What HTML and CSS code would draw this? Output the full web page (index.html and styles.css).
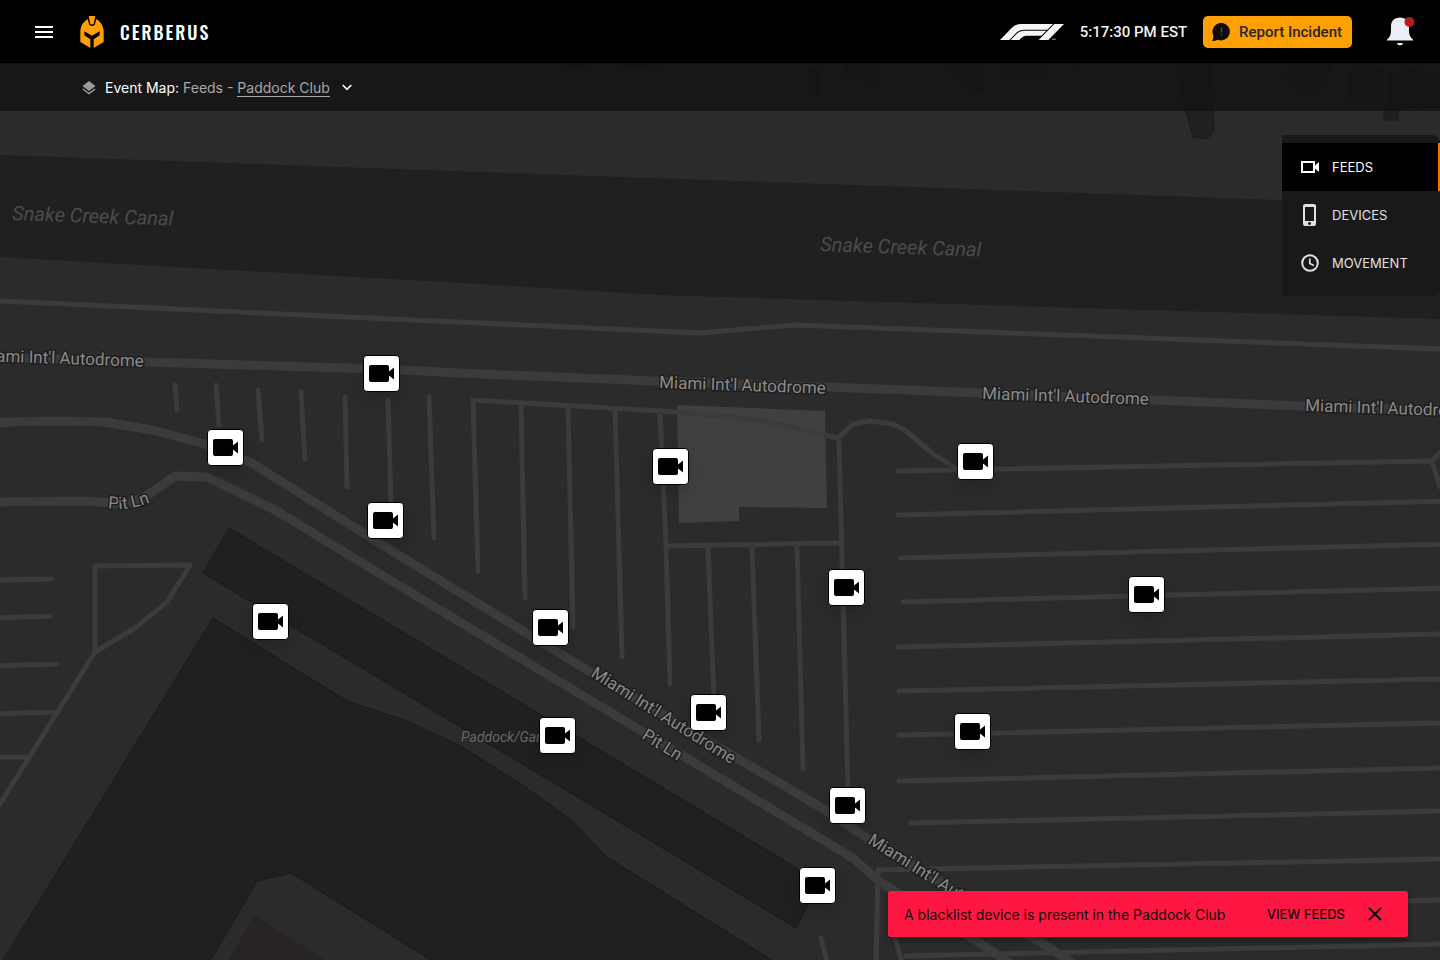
FILE: index.html
```html
<!DOCTYPE html>
<html lang="en">
<head>
<meta charset="utf-8">
<meta name="viewport" content="width=device-width, initial-scale=1">
<title>Cerberus - Event Map</title>
<link rel="stylesheet" href="styles.css">
</head>
<body>
<svg class="sprite" aria-hidden="true">
  <symbol id="cam" viewBox="0 0 25 17"><path d="M2 0H18Q20 0 20 2V6.500L25 2.500V14.500L20 10.500V15Q20 17 18 17H2Q0 17 0 15V2Q0 0 2 0Z"/></symbol>
</svg>

<header class="topbar">
  <button class="icon-btn menu-btn" aria-label="Open menu">
    <svg width="18" height="12" viewBox="0 0 18 12"><path fill="#fff" d="M0 0h18v2H0zM0 5h18v2H0zM0 10h18v2H0z"/></svg>
  </button>
  <a class="brand" href="#">
    <svg width="24" height="32" viewBox="239 48 72 96" aria-hidden="true">
      <path fill="#ffa000" d="M240 92C241 78 248 66 262 57L267 75Q275 81 283 75L288 57C301 65 309 78 310 92V126L280 144V118L298 106V94L275 107L252 94V106L270 118V144L240 126Z"/>
      <path fill="#ffa000" d="M265 48H285L280 73H270Z"/>
    </svg>
    <span class="brand-name">CERBERUS</span>
  </a>
  <div class="top-actions">
    <svg class="f1" width="66" height="18" viewBox="60 69 198 54" role="img" aria-label="F1">
      <g fill="#f5f5f5">
        <path d="M63 120L98 84Q110 72 126 72H222L205 89H134Q121 89 112 98L91 120Z"/>
        <path d="M95 120L115 100Q123 92 134 92H202L187 107H142Q134 107 128 113L121 120Z"/>
        <path d="M179 120L226 72H255L208 120Z"/>
        <path d="M219 116h11v4h-11z" opacity=".5"/>
      </g>
    </svg>
    <time class="clock">5:17:30 PM EST</time>
    <button class="report">
      <svg width="18" height="18" viewBox="0 0 18 18" aria-hidden="true"><path fill="#0b0b0b" d="M9.500 0A8.700 8.700 0 1 1 6 16.800Q3 18 0 18Q1.600 15.800 1.300 12.500A8.700 8.700 0 0 1 9.500 0Z"/><path fill="#6d4500" d="M8.700 4.500h1.600v5H8.700zM8.700 11h1.600v1.600H8.700z"/></svg>
      <span>Report Incident</span>
    </button>
    <button class="icon-btn bell" aria-label="Notifications">
      <svg width="28" height="30" viewBox="0 0 28 30"><path fill="#eceff3" d="M13 0.500C18.500 0.500 22 4 22 9V14C22 18 23.500 20.500 26 22.500V23.500H0V22.500C2.500 20.500 4 18 4 14V9C4 4 7.500 0.500 13 0.500ZM9.800 26H16.200A3.300 3.300 0 0 1 9.800 26Z"/><circle cx="22.500" cy="5" r="5" fill="#b71c1c"/></svg>
    </button>
  </div>
</header>

<nav class="subbar" aria-label="Map view">
  <svg width="14" height="14" viewBox="0 0 14 14" aria-hidden="true"><path fill="#9b9b9b" d="M7 0L13.500 5L7 10L0.500 5Z"/><path fill="none" stroke="#9b9b9b" stroke-width="1.500" d="M0.800 8L7 12.600L13.200 8"/></svg>
  <p class="crumb"><strong>Event Map:</strong> Feeds - <a href="#">Paddock Club</a></p>
  <button class="icon-btn" aria-label="Choose location"><svg width="10" height="7" viewBox="0 0 10 7"><path fill="none" stroke="#fff" stroke-width="1.600" d="M0.700 1L5 5.300L9.300 1"/></svg></button>
</nav>

<main class="stage">
  <aside class="layers">
    <button class="layer is-active"><span class="layer-icon"><svg width="20" height="14" viewBox="0 0 20 14"><path fill="#fff" fill-rule="evenodd" d="M1 1H15V5.500L19 2V12L15 8.500V13H1ZM3 3V11H13V3Z"/></svg></span>FEEDS</button>
    <button class="layer"><span class="layer-icon"><svg width="14" height="22" viewBox="0 0 14 22"><path fill="#e0e0e0" fill-rule="evenodd" d="M2 0H11Q13 0 13 2V20Q13 22 11 22H2Q0 22 0 20V2Q0 0 2 0ZM2 3V17H11V3ZM6.500 18A1.500 1.500 0 1 0 6.510 18Z"/></svg></span>DEVICES</button>
    <button class="layer"><span class="layer-icon"><svg width="18" height="18" viewBox="0 0 18 18" fill="none" stroke="#e0e0e0" stroke-width="2"><circle cx="9" cy="9" r="7.800"/><path stroke-width="1.700" d="M8.800 4.500V9.500L12.800 11.500"/></svg></span>MOVEMENT</button>
  </aside>

  <div class="map">
    <svg class="map-art" width="1440" height="960" viewBox="0 0 1440 960" aria-label="Circuit map" role="img">
      <defs>
        <path id="pit-curve" d="M108 508Q128 512 156 500"/>
      </defs>
      <g class="water">
        <path d="M0 155L480 172L1282 200L1440 206V319L660 295L480 284L0 257Z"/>
      </g>
      <g class="plot">
        <path d="M1177 50V63L1183 100L1193 137L1207 139L1214 131L1212 50Z"/>
        <path d="M1007 50H1041L1040 79L1007 78ZM1065 50H1083L1075 69ZM1350 71L1368 72V67L1384 68L1383 104L1350 103ZM1388 72L1405 74L1406 69L1421 70L1420 107L1387 105ZM1424 74L1450 76V108L1423 106ZM1285 75L1296 58L1333 66L1311 96ZM1384 105H1398V120H1384ZM808 68L820 70V95L808 93ZM840 60H880V82L848 78ZM943 60H984V91L965 88ZM565 50H588V68L565 66ZM620 50H662V69L620 67Z"/>
        <path d="M229 528L820 882L796 928L203 573Z"/>
        <path fill-rule="evenodd" d="M213 618L347 701L410 722L462 747L518 782L570 819L607 857L780 965H0ZM208 965L257 881L291 873L439 965Z"/>
      </g>
      <path fill="#282425" d="M226 965L254 915L333 965Z"/>
      <path fill="#404040" d="M677 405L825 411L827 508L739 507V521L679 523Z"/>
      <g class="lane">
        <path d="M0 301L480 323L700 333L795 325L1440 349"/>
        <path d="M175 385L177 410M216 385L219 425M258 390L262 440M301 392L305 459M345 397L347 487M388 400L391 505M429 397L434 538M473 400L478 571M521 404L525 598M568 407L573 627M615 410L622 657M660 412L666 545L670 684M708 548L714 700M752 548L759 740M797 547L803 769M839 438L842 560L848 790M666 546L842 543"/>
        <path d="M473 400L677 412L760 420L838 438L853 424L870 421L893 424L905 430L932 453L955 468"/>
        <path d="M898 471L1432 461L1444 449M1432 461L1440 487M898 515L1445 501M901 558L1445 544M903 602L1445 588M898 647L1445 634M899 691L1445 679M899 735L1445 723M899 781L1445 768M911 823L1445 811M876 965L878 870L1445 859M1400 901L1445 900M906 956L1445 944M895 938L903 965M821 938L828 965"/>
        <path d="M-5 580L52 579M-5 618L51 616M-5 666L57 664M-5 714L57 712M-5 757L29 757M-5 800H4M95 566L190 565L167 602L135 628L95 652ZM95 652L-5 812"/>
      </g>
      <g class="road">
        <path d="M-5 357L145 362L381 369L480 374L655 381L880 389L1300 406L1445 411"/>
        <path d="M-5 424L8 422L55 421L105 422L152 430L205 444L250 462L400 556L587 670L827 811L867 838L1045 945L1080 968"/>
        <path d="M-5 502L85 501L125 504L145 497L175 476L207 477L275 510L400 586L640 730L853 858L880 882L920 906L978 942L1020 970"/>
      </g>
      <g class="water-label">
        <text transform="translate(12 220) rotate(2)">Snake Creek Canal</text>
        <text transform="translate(820 251) rotate(2)">Snake Creek Canal</text>
      </g>
      <g class="road-label">
        <text transform="translate(-23 361) rotate(2)">Miami Int'l Autodrome</text>
        <text transform="translate(659 388) rotate(2)">Miami Int'l Autodrome</text>
        <text transform="translate(982 399) rotate(2)">Miami Int'l Autodrome</text>
        <text transform="translate(1305 411) rotate(2)">Miami Int'l Autodrome</text>
        <text transform="translate(590 676) rotate(32)">Miami Int'l Autodrome</text>
        <text transform="translate(867 843) rotate(32)">Miami Int'l Autodrome</text>
        <text transform="translate(641 738) rotate(32)">Pit Ln</text>
        <text><textPath href="#pit-curve">Pit Ln</textPath></text>
      </g>
      <text class="place-label" x="461" y="742">Paddock/Garage</text>
    </svg>
    <button class="pin" aria-label="Camera 1" style="left:381px;top:373px"><svg><use href="#cam"/></svg></button>
    <button class="pin" aria-label="Camera 2" style="left:225px;top:447px"><svg><use href="#cam"/></svg></button>
    <button class="pin" aria-label="Camera 3" style="left:385px;top:520px"><svg><use href="#cam"/></svg></button>
    <button class="pin" aria-label="Camera 4" style="left:270px;top:621px"><svg><use href="#cam"/></svg></button>
    <button class="pin" aria-label="Camera 5" style="left:550px;top:627px"><svg><use href="#cam"/></svg></button>
    <button class="pin" aria-label="Camera 6" style="left:557px;top:735px"><svg><use href="#cam"/></svg></button>
    <button class="pin" aria-label="Camera 7" style="left:670px;top:466px"><svg><use href="#cam"/></svg></button>
    <button class="pin" aria-label="Camera 8" style="left:846px;top:587px"><svg><use href="#cam"/></svg></button>
    <button class="pin" aria-label="Camera 9" style="left:708px;top:712px"><svg><use href="#cam"/></svg></button>
    <button class="pin" aria-label="Camera 10" style="left:847px;top:805px"><svg><use href="#cam"/></svg></button>
    <button class="pin" aria-label="Camera 11" style="left:817px;top:885px"><svg><use href="#cam"/></svg></button>
    <button class="pin" aria-label="Camera 12" style="left:975px;top:461px"><svg><use href="#cam"/></svg></button>
    <button class="pin" aria-label="Camera 13" style="left:972px;top:731px"><svg><use href="#cam"/></svg></button>
    <button class="pin" aria-label="Camera 14" style="left:1146px;top:594px"><svg><use href="#cam"/></svg></button>
  </div>
</main>

<div class="toast" role="alert">
  <p class="toast-text">A blacklist device is present in the Paddock Club</p>
  <button class="toast-action">VIEW FEEDS</button>
  <button class="icon-btn" aria-label="Dismiss"><svg width="14" height="14" viewBox="0 0 14 14"><path fill="none" stroke="#0b0b0b" stroke-width="2" d="M1 1L13 13M13 1L1 13"/></svg></button>
</div>
</body>
</html>
```
FILE: styles.css
```css
* { box-sizing: border-box; }
body {
  margin: 0;
  min-height: 100vh;
  display: flex;
  flex-direction: column;
  position: relative;
  overflow: hidden;
  background: #2b2b2b;
  color: #fff;
  font-family: Inter, "Liberation Sans", sans-serif;
  font-size: 14px;
}
p { margin: 0; }
svg { display: block; flex: none; }
button { font: inherit; border: 0; margin: 0; padding: 0; cursor: pointer; }
.sprite { position: absolute; width: 0; height: 0; }
.icon-btn { background: none; }

.topbar {
  display: flex;
  align-items: center;
  height: 64px;
  padding: 0 25px 0 35px;
  background: #000;
  border-bottom: 1px solid #111;
}
.brand {
  display: flex;
  align-items: center;
  gap: 16px;
  margin-left: 27px;
  color: #fff;
  text-decoration: none;
}
.brand-name {
  font-family: Oswald, "Liberation Sans Narrow", "DejaVu Sans Condensed", sans-serif;
  font-size: 18px;
  font-weight: 500;
  letter-spacing: 2px;
}
.top-actions {
  display: flex;
  align-items: center;
  margin-left: auto;
}
.clock {
  margin: 0 16px 0 15px;
  font-family: Roboto, sans-serif;
  font-weight: 500;
  font-size: 15px;
  color: #f2f2f2;
}
.report {
  display: flex;
  align-items: center;
  gap: 9px;
  height: 32px;
  padding: 0 10px 0 9px;
  border-radius: 5px;
  background: #ffa000;
  color: #262626;
  font-family: Roboto, sans-serif;
  font-weight: 500;
  font-size: 15px;
}
.bell { margin-left: 35px; }

.subbar {
  display: flex;
  align-items: center;
  height: 47px;
  padding-left: 82px;
  background: rgba(20, 20, 20, .82);
}
.crumb { margin: 0 12px 0 9px; color: #a8a8a8; }
.crumb strong { font-weight: 400; color: #fff; }
.crumb a {
  color: inherit;
  text-decoration: none;
  border-bottom: 1px solid #a8a8a8;
}

.stage {
  flex: 1;
  display: flex;
  justify-content: flex-end;
  align-items: flex-start;
  padding-top: 24px;
}
.layers {
  display: flex;
  flex-direction: column;
  width: 158px;
  padding: 8px 0 9px;
  background: #191919;
  border-radius: 0 8px 8px 0;
}
.layer {
  display: flex;
  align-items: center;
  height: 48px;
  padding-left: 14px;
  background: none;
  color: #e0e0e0;
  font-size: 13px;
  text-align: left;
}
.layer.is-active {
  background: #000;
  color: #fff;
  border-right: 2px solid #ff6d00;
}
.layer-icon {
  display: flex;
  justify-content: center;
  width: 27px;
  margin-right: 9px;
}

.map {
  position: absolute;
  inset: 0;
  z-index: -1;
  overflow: hidden;
}
.water { fill: #202020; }
.plot { fill: #202020; stroke: #1a1a1a; }
.lane, .road { fill: none; stroke: #3b3b3b; stroke-width: 5; stroke-linecap: round; stroke-linejoin: round; }
.road { stroke-width: 9; }
.water-label {
  font: italic 20px Roboto, sans-serif;
  fill: #4b4b4b;
}
.road-label {
  font: 17px Roboto, sans-serif;
  fill: #8a8a8a;
  stroke: #1e1e1e;
  stroke-width: 3px;
  paint-order: stroke;
}
.place-label {
  font: italic 14px Roboto, sans-serif;
  fill: #686868;
  stroke: #1e1e1e;
  stroke-width: 1px;
  paint-order: stroke;
}
.pin {
  position: absolute;
  display: flex;
  align-items: center;
  justify-content: center;
  width: 37px;
  height: 37px;
  margin: -18px 0 0 -18px;
  border: 1px solid #000;
  border-radius: 4px;
  background: #fff;
  box-shadow: 0 6px 14px rgba(0, 0, 0, .15);
}
.pin svg { width: 25px; height: 17px; }

.toast {
  position: absolute;
  right: 32px;
  bottom: 23px;
  display: flex;
  align-items: center;
  width: 520px;
  height: 46px;
  padding: 0 26px 0 16px;
  border-radius: 3px;
  background: #ff1744;
  color: #0b0b0b;
  box-shadow: 0 3px 6px rgba(0, 0, 0, .4);
}
.toast-text { flex: 1; }
.toast-action {
  margin-right: 23px;
  background: none;
  color: inherit;
  font-size: 13px;
  font-weight: 500;
}
```
